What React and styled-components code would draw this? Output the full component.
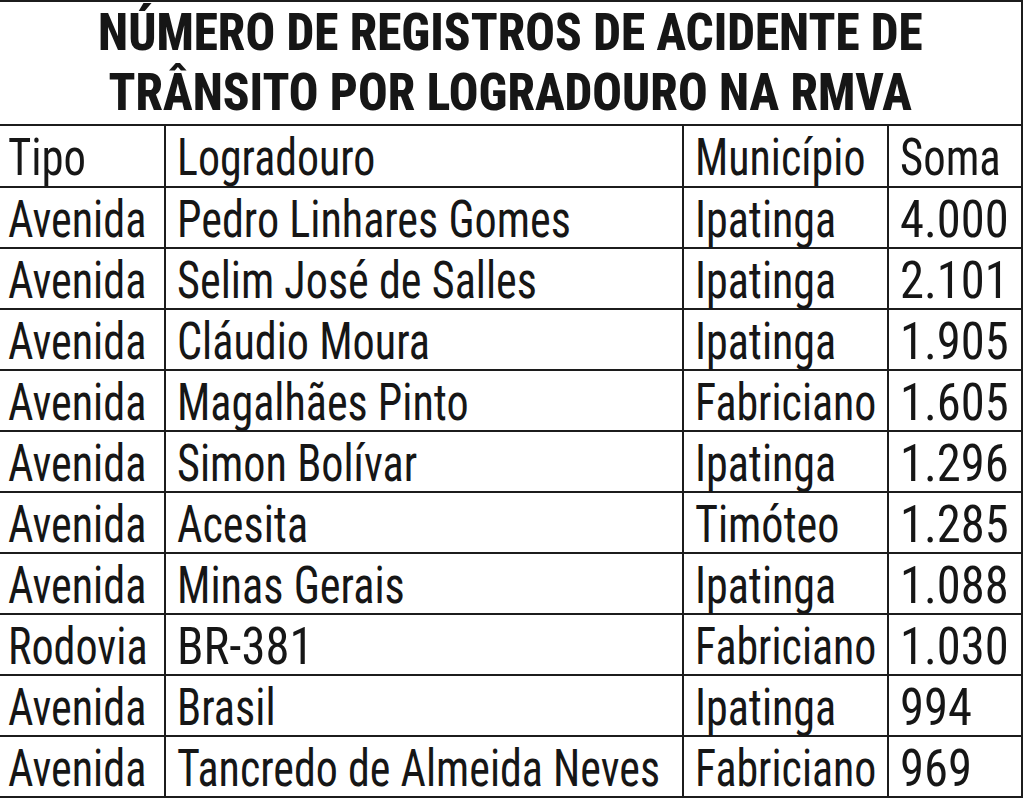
import React from "react";
import styled, { createGlobalStyle } from "styled-components";

const Global = createGlobalStyle`
  html, body { margin: 0; padding: 0; background: #fff; }
  body { font-family: "Roboto Condensed", "Open Sans", sans-serif; color: #161616; }
  * { box-sizing: border-box; }
`;

const Frame = styled.div`
  width: 1023px;
  border-top: 2px solid #1c1c1c;
  border-right: 2px solid #1c1c1c;
`;

const Title = styled.h1`
  margin: 0;
  height: 124px;
  padding-top: 1px;
  border-bottom: 2px solid #1c1c1c;
  display: flex;
  flex-direction: column;
  align-items: center;
  font-family: "Roboto Condensed", sans-serif;
  font-weight: 800;
  font-size: 52px;
  line-height: 60px;
  text-transform: uppercase;
`;

const TitleLine = styled.span`
  display: inline-block;
  white-space: nowrap;
  transform: scaleX(0.947);
  transform-origin: center center;
`;

const Row = styled.div`
  display: grid;
  grid-template-columns: 164px 518px 205px 1fr;
  height: ${(p) => (p.$head ? 62 : 61)}px;
  border-bottom: 2px solid #1c1c1c;
`;

const Cell = styled.div`
  display: flex;
  align-items: center;
  padding-left: ${(p) => (p.$first ? 8 : 11)}px;
  border-left: ${(p) => (p.$first ? "none" : "2px solid #1c1c1c")};
  padding-top: 1px;
  min-width: 0;
`;

const CellText = styled.span`
  display: inline-block;
  font-family: "Roboto Condensed", sans-serif;
  font-size: 52px;
  font-weight: 430;
  white-space: nowrap;
  transform: scaleX(${(p) => p.$sx});
  transform-origin: left center;
`;

const rows = [
  ["Avenida", "Pedro Linhares Gomes", "Ipatinga", "4.000"],
  ["Avenida", "Selim José de Salles", "Ipatinga", "2.101"],
  ["Avenida", "Cláudio Moura", "Ipatinga", "1.905"],
  ["Avenida", "Magalhães Pinto", "Fabriciano", "1.605"],
  ["Avenida", "Simon Bolívar", "Ipatinga", "1.296"],
  ["Avenida", "Acesita", "Timóteo", "1.285"],
  ["Avenida", "Minas Gerais", "Ipatinga", "1.088"],
  ["Rodovia", "BR-381", "Fabriciano", "1.030"],
  ["Avenida", "Brasil", "Ipatinga", "994"],
  ["Avenida", "Tancredo de Almeida Neves", "Fabriciano", "969"],
];

// digits and capitals are relatively wider in the reference face than lowercase
function squeeze(text) {
  const chars = [...text];
  const wide = chars.filter((c) => /[0-9A-Z.\-]/.test(c)).length;
  const r = wide / chars.length;
  return 0.835 + 0.1 * r;
}

function TableRow({ cells, head }) {
  return (
    <Row $head={head}>
      {cells.map((c, i) => (
        <Cell key={i} $first={i === 0}>
          <CellText $sx={squeeze(c)}>{c}</CellText>
        </Cell>
      ))}
    </Row>
  );
}

export default function App() {
  return (
    <>
      <Global />
      <Frame>
        <Title>
          <TitleLine>Número de registros de acidente de</TitleLine>
          <TitleLine>trânsito por logradouro na RMVA</TitleLine>
        </Title>
        <TableRow head cells={["Tipo", "Logradouro", "Município", "Soma"]} />
        {rows.map((r, i) => (
          <TableRow key={i} cells={r} />
        ))}
      </Frame>
    </>
  );
}
